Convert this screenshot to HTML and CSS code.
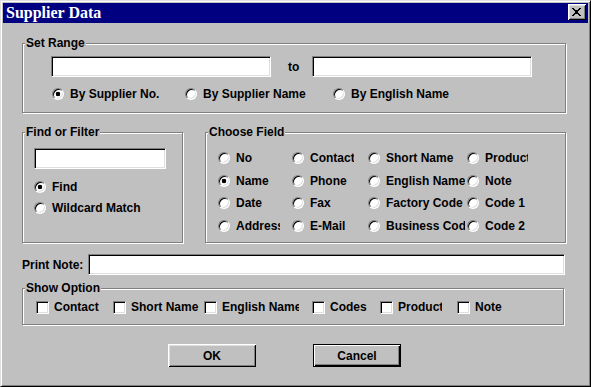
FILE: index.html
```html
<!DOCTYPE html>
<html>
  <head>
    <title>Supplier Data</title>
    <meta charset="utf-8" />
    <link rel="stylesheet" href="styles.css">
  </head>
  <body>
    <div class="window">
      <div class="titlebar">
        <span class="title">Supplier Data</span>
        <button class="close" type="button">
          <svg width="8" height="7" viewBox="0 0 8 7" shape-rendering="crispEdges">
            <path d="M0 0h2v1h-2zM6 0h2v1h-2zM1 1h2v1h-2zM5 1h2v1h-2zM2 2h4v1h-4zM3 3h2v1h-2zM2 4h4v1h-4zM1 5h2v1h-2zM5 5h2v1h-2zM0 6h2v1h-2zM6 6h2v1h-2z" fill="#000"/>
          </svg>
        </button>
      </div>

      <form class="dialog" name="supplier">
        <div class="group range">
          <span class="group-title">Set Range</span>
          <div class="range-inputs">
            <input class="field range-field" type="text" name="from" />
            <span class="to">to</span>
            <input class="field range-field range-to" type="text" name="to" />
          </div>
          <div class="range-options">
            <label class="opt opt-no"><input class="radio" type="radio" name="range" checked /><span>By Supplier No.</span></label>
            <label class="opt opt-name"><input class="radio" type="radio" name="range" /><span>By Supplier Name</span></label>
            <label class="opt"><input class="radio" type="radio" name="range" /><span>By English Name</span></label>
          </div>
        </div>

        <div class="middle">
          <div class="group find">
            <span class="group-title">Find or Filter</span>
            <input class="field find-field" type="text" name="find" />
            <label class="opt find-opt"><input class="radio" type="radio" name="mode" checked /><span>Find</span></label>
            <label class="opt find-opt wild"><input class="radio" type="radio" name="mode" /><span>Wildcard Match</span></label>
          </div>

          <div class="group fields">
            <span class="group-title">Choose Field</span>
            <div class="field-grid">
              <label class="opt"><input class="radio" type="radio" name="field" /><span>No</span></label>
              <label class="opt"><input class="radio" type="radio" name="field" /><span>Contact</span></label>
              <label class="opt"><input class="radio" type="radio" name="field" /><span>Short Name</span></label>
              <label class="opt"><input class="radio" type="radio" name="field" /><span>Product</span></label>
              <label class="opt"><input class="radio" type="radio" name="field" checked /><span>Name</span></label>
              <label class="opt"><input class="radio" type="radio" name="field" /><span>Phone</span></label>
              <label class="opt"><input class="radio" type="radio" name="field" /><span>English Name</span></label>
              <label class="opt"><input class="radio" type="radio" name="field" /><span>Note</span></label>
              <label class="opt"><input class="radio" type="radio" name="field" /><span>Date</span></label>
              <label class="opt"><input class="radio" type="radio" name="field" /><span>Fax</span></label>
              <label class="opt"><input class="radio" type="radio" name="field" /><span>Factory Code</span></label>
              <label class="opt"><input class="radio" type="radio" name="field" /><span>Code 1</span></label>
              <label class="opt"><input class="radio" type="radio" name="field" /><span>Address</span></label>
              <label class="opt"><input class="radio" type="radio" name="field" /><span>E-Mail</span></label>
              <label class="opt"><input class="radio" type="radio" name="field" /><span>Business Code</span></label>
              <label class="opt"><input class="radio" type="radio" name="field" /><span>Code 2</span></label>
            </div>
          </div>
        </div>

        <div class="note-row">
          <label class="note-label" for="note">Print Note:</label>
          <input class="field note-field" type="text" id="note" name="note" />
        </div>

        <div class="group show">
          <span class="group-title">Show Option</span>
          <div class="show-list">
            <label class="opt chk-contact"><input class="check" type="checkbox" /><span>Contact</span></label>
            <label class="opt chk-short"><input class="check" type="checkbox" /><span>Short Name</span></label>
            <label class="opt chk-english"><input class="check" type="checkbox" /><span>English Name</span></label>
            <label class="opt chk-codes"><input class="check" type="checkbox" /><span>Codes</span></label>
            <label class="opt chk-product"><input class="check" type="checkbox" /><span>Product</span></label>
            <label class="opt"><input class="check" type="checkbox" /><span>Note</span></label>
          </div>
        </div>

        <div class="buttons">
          <button class="btn btn-ok" type="submit">OK</button>
          <button class="btn btn-cancel" type="button">Cancel</button>
        </div>
      </form>
    </div>
  </body>
</html>
```

FILE: styles.css
```css
body {
  margin: 0;
  background: #c0c0c0;
  font-family: "Liberation Sans", Arial, sans-serif;
  font-size: 12px;
  font-weight: bold;
  color: #000;
}
.window {
  width: 591px;
  height: 387px;
  box-sizing: border-box;
  background: #c0c0c0;
  border: 1px solid;
  border-color: #dfdfdf #000 #000 #dfdfdf;
  box-shadow: inset 1px 1px 0 #fff, inset -1px -1px 0 #808080;
  padding: 2px;
}
.titlebar {
  height: 20px;
  background: #000080;
  display: flex;
  align-items: center;
  justify-content: space-between;
}
.title {
  color: #fff;
  font-family: "Liberation Serif", "Times New Roman", serif;
  font-size: 16px;
  font-weight: bold;
  padding-left: 3px;
  line-height: 20px;
}
.close {
  width: 18px;
  height: 16px;
  margin: 0 2px 2px 0;
  padding: 0 1px 1px 0;
  border: none;
  background: #c0c0c0;
  box-shadow: inset 1px 1px 0 #fff, inset -1px -1px 0 #000, inset 2px 2px 0 #dfdfdf, inset -2px -2px 0 #808080;
  display: flex;
  align-items: center;
  justify-content: center;
}
.close svg {
  width: 9px;
  height: 8px;
}

.dialog {
  padding: 20px 22px 0 19px;
}
.group {
  box-sizing: border-box;
  border: 1px solid #808080;
  box-shadow: 1px 1px 0 #fff, inset 1px 1px 0 #fff;
}
.group-title {
  display: table;
  margin: -8px 0 0 2px;
  padding: 0 1px;
  background: #c0c0c0;
  line-height: 14px;
}

.field {
  box-sizing: border-box;
  height: 21px;
  margin: 0;
  padding: 0 3px;
  border: 1px solid;
  border-color: #808080 #fff #fff #808080;
  box-shadow: inset 1px 1px 0 #000, inset -1px -1px 0 #dfdfdf;
  background: #fff;
  font: inherit;
  outline: none;
}

.opt {
  display: flex;
  align-items: center;
  gap: 6px;
  height: 14px;
  line-height: 14px;
  white-space: nowrap;
  overflow: hidden;
}
.radio {
  appearance: none;
  flex: none;
  width: 12px;
  height: 12px;
  margin: 0;
  border: 1px solid;
  border-color: #808080 #fff #fff #808080;
  border-radius: 50%;
  box-shadow: inset 1px 1px 0 #000, inset -1px -1px 0 #dfdfdf;
  background: #fff;
}
.radio:checked {
  background: radial-gradient(circle, #000 2px, #fff 2.6px);
}
.check {
  appearance: none;
  flex: none;
  width: 13px;
  height: 13px;
  margin: 0;
  border: 1px solid;
  border-color: #808080 #fff #fff #808080;
  box-shadow: inset 1px 1px 0 #000, inset -1px -1px 0 #dfdfdf;
  background: #fff;
}

/* set range */
.range {
  height: 70px;
}
.range-inputs {
  display: flex;
  align-items: center;
  margin: 6px 0 0 28px;
}
.range-field {
  width: 220px;
}
.to {
  margin-left: 17px;
  width: 24px;
}
.range-options {
  display: flex;
  margin: 10px 0 0 29px;
}
.opt-no {
  width: 133px;
}
.opt-name {
  width: 148px;
}

/* find / choose field */
.middle {
  display: flex;
  gap: 22px;
  margin-top: 19px;
}
.find {
  width: 161px;
  height: 111px;
}
.find-field {
  display: block;
  width: 132px;
  margin: 9px 0 0 11px;
}
.find-opt {
  margin: 11px 0 0 11px;
}
.find-opt.wild {
  margin-top: 7px;
}
.fields {
  width: 361px;
  height: 111px;
}
.field-grid {
  display: grid;
  grid-template-columns: 74px 76px 99px 62px;
  grid-auto-rows: 22.5px;
  align-items: center;
  margin: 8px 0 0 12px;
}
.field-grid .opt:nth-child(4n+1),
.field-grid .opt:nth-child(4n+2) {
  width: 62px;
}
.field-grid .opt:nth-child(4n+3) {
  width: 97px;
}
.field-grid .opt:nth-child(4n) {
  width: 61px;
}

/* print note */
.note-row {
  display: flex;
  align-items: center;
  margin-top: 11px;
}
.note-label {
  width: 66px;
  flex: none;
}
.note-field {
  width: 477px;
}

/* show option */
.show {
  width: 542px;
  height: 37px;
  margin-top: 13px;
}
.show-list {
  display: flex;
  margin: 5px 0 0 13px;
}
.show-list .opt {
  gap: 5px;
}
.chk-contact {
  width: 77px;
}
.chk-short {
  width: 91px;
}
.chk-english {
  width: 95px;
  margin-right: 13px;
}
.chk-codes {
  width: 68px;
}
.chk-product {
  width: 62px;
  margin-right: 15px;
}

/* buttons */
.buttons {
  display: flex;
  margin-top: 19px;
}
.btn {
  box-sizing: border-box;
  width: 88px;
  height: 23px;
  margin: 0;
  padding: 0;
  border: none;
  background: #c0c0c0;
  font: inherit;
  color: #000;
  box-shadow: inset 1px 1px 0 #fff, inset -1px -1px 0 #000, inset 2px 2px 0 #dfdfdf, inset -2px -2px 0 #808080;
}
.btn-ok {
  margin-left: 146px;
}
.btn-cancel {
  margin-left: 57px;
  border: 1px solid #000;
  box-shadow: inset 1px 1px 0 #fff, inset -1px -1px 0 #000, inset -2px -2px 0 #808080;
}
```
